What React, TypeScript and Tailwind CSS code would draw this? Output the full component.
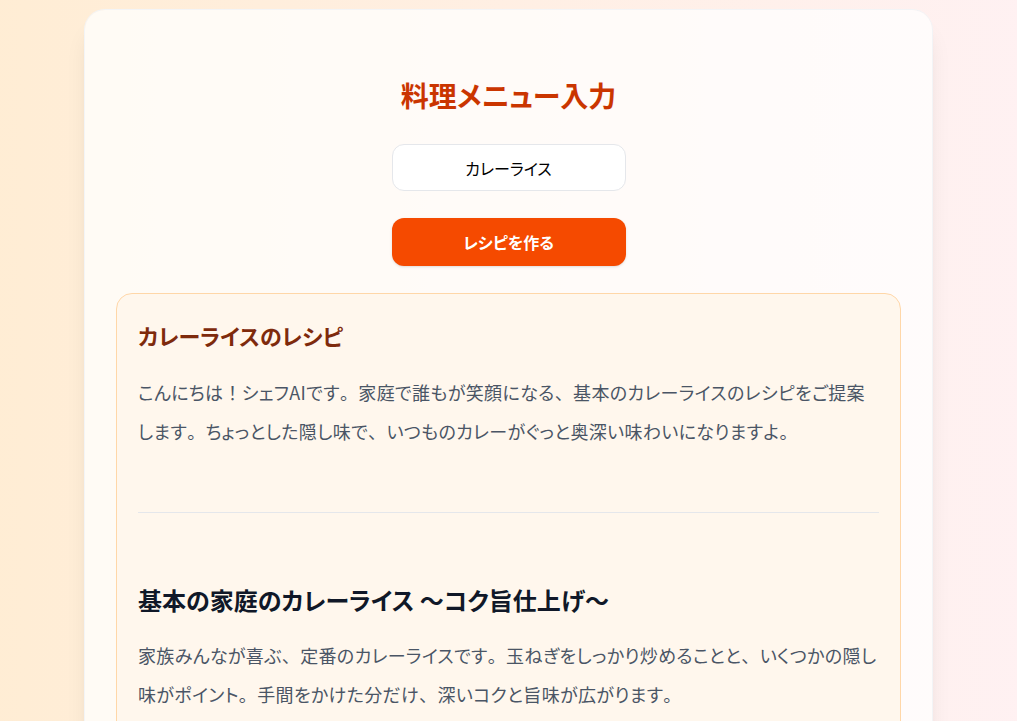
import React, { useState } from 'react';

const FONT = "font-['Noto_Sans_CJK_JP','Noto_Sans',sans-serif] [font-feature-settings:'palt']";

// kana stay proportional, but punctuation keeps its full width
const PUNCT = '、。！？';

const Jp: React.FC<{ text: string }> = ({ text }) => {
  const parts = text.split(/([、。！？])/);
  return (
    <>
      {parts.map((p, i) =>
        PUNCT.includes(p) && p !== '' ? (
          <span key={i} className="[font-feature-settings:normal]">{p}</span>
        ) : (
          <React.Fragment key={i}>{p}</React.Fragment>
        )
      )}
    </>
  );
};

const RecipeCard: React.FC<{ dish: string }> = ({ dish }) => {
  return (
    <section className="mt-[27px] rounded-2xl border border-orange-200 bg-orange-50 px-[21px] pt-[23px] pb-10">
      <h2 className="text-[22px] leading-[36px] font-bold text-[#7e2a0c]">{dish}のレシピ</h2>
      <p className="mt-[20px] text-[18px] leading-[39px] tracking-[0.02em] text-gray-600">
        <Jp text="こんにちは！シェフAIです。家庭で誰もが笑顔になる、基本のカレーライスのレシピをご提案します。ちょっとした隠し味で、いつものカレーがぐっと奥深い味わいになりますよ。" />
      </p>
      <hr className="mt-[61px] border-gray-200" />
      <h3 className="mt-[69px] text-[24px] leading-[36px] font-bold text-gray-900">
        基本の家庭のカレーライス 〜コク旨仕上げ〜
      </h3>
      <p className="mt-[18px] text-[18px] leading-[39px] tracking-[0.02em] text-gray-600">
        <Jp text="家族みんなが喜ぶ、定番のカレーライスです。玉ねぎをしっかり炒めることと、いくつかの隠し味がポイント。手間をかけた分だけ、深いコクと旨味が広がります。" />
      </p>
    </section>
  );
};

export default function App() {
  const [dish, setDish] = useState('カレーライス');

  return (
    <div className={`min-h-screen bg-gradient-to-r from-orange-100 to-rose-50 pt-[10px] ${FONT}`}>
      <main className="mx-auto w-[847px] rounded-[20px] bg-white/75 px-[31px] pt-[67px] pb-10 shadow-xl ring-1 ring-gray-100">
        <h1 className="text-center text-[28px] leading-[36px] font-bold text-orange-700">料理メニュー入力</h1>
        <div className="mt-[31px] flex flex-col items-center">
          <input
            value={dish}
            onChange={(e) => setDish(e.target.value)}
            className="h-[47px] w-[234px] rounded-xl border border-gray-200 bg-white text-center text-[16px] text-black outline-none"
          />
          <button className="mt-[27px] h-[48px] w-[234px] rounded-xl bg-orange-600 text-[16px] font-bold text-white shadow-sm">
            レシピを作る
          </button>
        </div>
        <RecipeCard dish={dish} />
      </main>
    </div>
  );
}
